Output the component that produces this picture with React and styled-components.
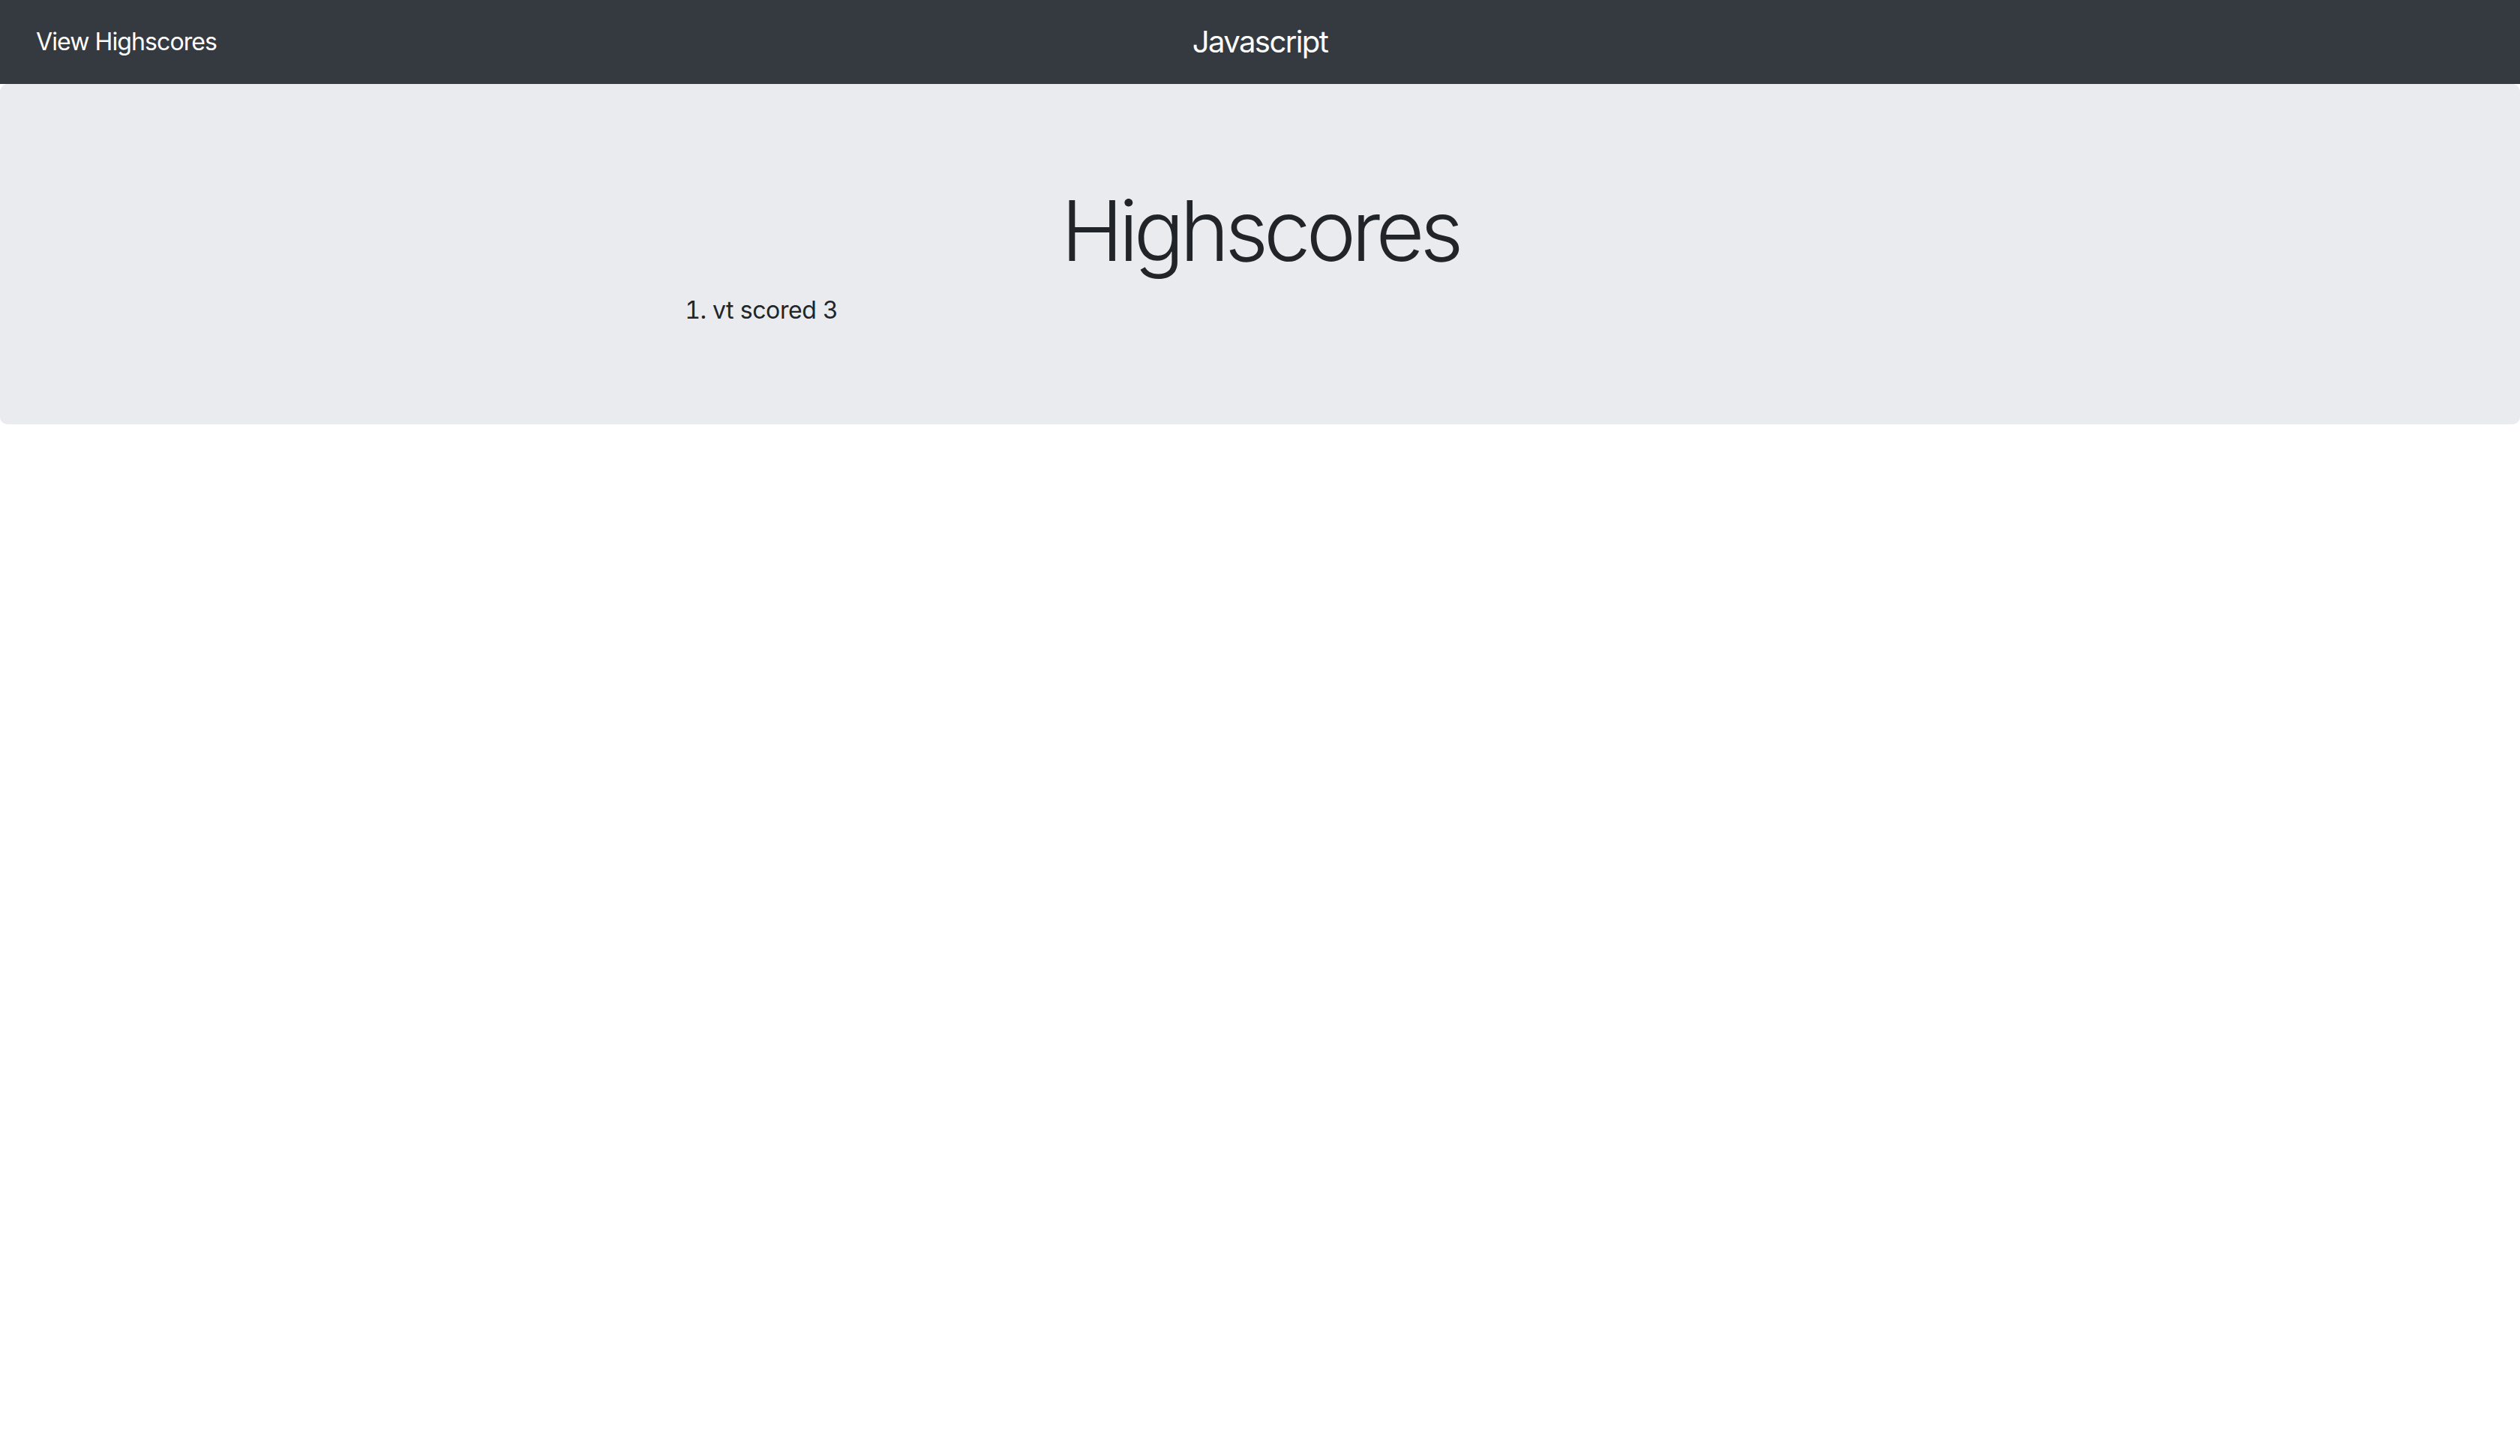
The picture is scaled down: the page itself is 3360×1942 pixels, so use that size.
import React from 'react';
import styled, { createGlobalStyle } from 'styled-components';

const GlobalStyle = createGlobalStyle`
  * { box-sizing: border-box; }
  body {
    margin: 0;
    background: #ffffff;
    color: #212529;
    font-family: Inter, "Noto Sans", "Liberation Sans", sans-serif;
    font-size: 32px;
    line-height: 1.5;
  }
`

const Navbar = styled.nav`
  height: 112px;
  background: #343a40;
  display: grid;
  grid-template-columns: 1fr auto 1fr;
  align-items: center;
  padding: 0 32px;
`

const NavLink = styled.a`
  justify-self: start;
  padding: 16px;
  color: #ffffff;
  font-size: 32px;
  line-height: 48px;
  letter-spacing: -0.9px;
  text-decoration: none;
  cursor: pointer;
`

const Brand = styled.span`
  color: #ffffff;
  font-size: 40px;
  line-height: 60px;
  letter-spacing: -1.6px;
`

const Jumbotron = styled.section`
  background: #e9ebef;
  border-radius: 10px;
  padding: 128px 0;
  margin-bottom: 64px;
`

const Row = styled.div`
  display: grid;
  grid-template-columns: repeat(12, 190px);
  justify-content: center;
`

const Col = styled.div`
  grid-column: ${({ offset }) => offset + 1} / span ${({ span }) => span};
  padding: 0 30px;
`

const Title = styled.h1`
  margin: 0 0 16px;
  text-align: center;
  font-size: 112px;
  font-weight: 300;
  line-height: 1.2;
  letter-spacing: -6px;
`

const ScoreList = styled.ol`
  margin: 0;
  padding: 0;
`

const ScoreItem = styled.li`
  font-size: 32px;
  line-height: 48px;
  letter-spacing: -0.4px;
`

const scores = [{ name: 'vt', score: 3 }];

export default function App() {
  return (
    <>
      <GlobalStyle />
      <Navbar>
        <NavLink>View Highscores</NavLink>
        <Brand>Javascript</Brand>
        <span />
      </Navbar>
      <Jumbotron>
        <Row>
          <Col offset={2} span={8}>
            <Title>Highscores</Title>
            <ScoreList>
              {scores.map((s, i) => (
                <ScoreItem key={i}>{s.name} scored {s.score}</ScoreItem>
              ))}
            </ScoreList>
          </Col>
        </Row>
      </Jumbotron>
    </>
  );
}
